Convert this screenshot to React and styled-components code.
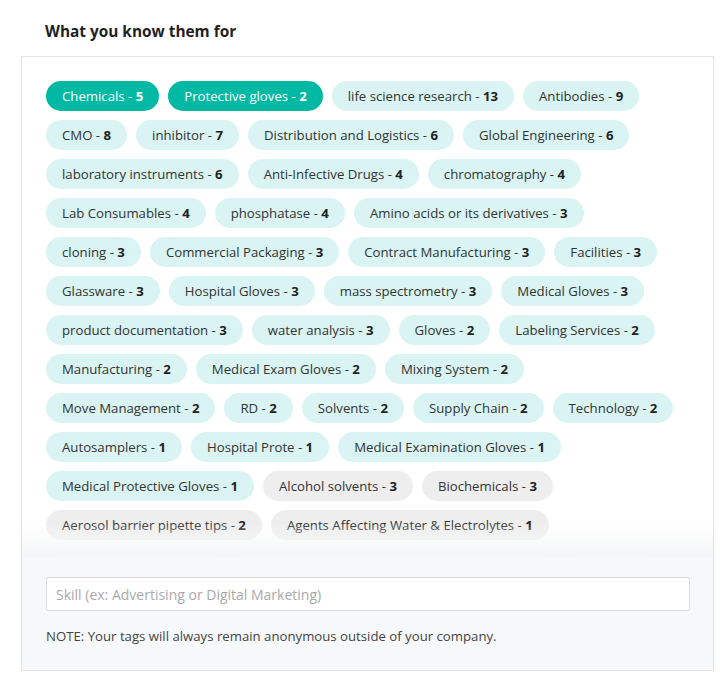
import React from 'react';
import styled, { createGlobalStyle } from 'styled-components';

const GlobalStyle = createGlobalStyle`
  body {
    margin: 0;
    background: #ffffff;
    font-family: "Open Sans", "Liberation Sans", sans-serif;
    color: #333333;
  }
`;

const Page = styled.div`
  width: 728px;
  padding: 21px 14px 12px 21px;
  box-sizing: border-box;
`;

const Heading = styled.h3`
  margin: 0 0 13px 24px;
  font-size: 15.4px;
  line-height: 22px;
  font-weight: 700;
  color: #1f1f1f;
`;

const Panel = styled.div`
  border: 1px solid #e3e3e3;
  display: flex;
  flex-direction: column;
`;

const TagArea = styled.div`
  position: relative;
  height: 500px;
  overflow: hidden;
  background: #ffffff;
`;

const TagList = styled.div`
  display: flex;
  flex-wrap: wrap;
  padding: 24px 24px 15px;
`;

const Fade = styled.div`
  position: absolute;
  left: 0;
  right: 0;
  bottom: 0;
  height: 34px;
  background: linear-gradient(to bottom, rgba(255, 255, 255, 0) 0%, rgba(246, 247, 248, 0.85) 75%, #f4f5f6 100%);
  pointer-events: none;
`;

const tones = {
  active: { bg: '#00b9a5', color: '#ffffff', count: '#ffffff' },
  known: { bg: '#d9f4f2', color: '#333333', count: '#222222' },
  other: { bg: '#eeeeee', color: '#333333', count: '#222222' },
};

const Tag = styled.span`
  display: inline-flex;
  align-items: center;
  height: 30px;
  margin: 0 9px 9px 0;
  padding: 0 16px;
  border-radius: 15px;
  font-size: 13.2px;
  white-space: pre;
  background: ${({ $tone }) => tones[$tone].bg};
  color: ${({ $tone }) => tones[$tone].color};

  b {
    font-weight: 700;
    color: ${({ $tone }) => tones[$tone].count};
  }
`;

const Footer = styled.div`
  background: #f7f8fa;
  padding: 20px 24px 25px;
  display: flex;
  flex-direction: column;
  gap: 16px;
`;

const Input = styled.input`
  height: 34px;
  box-sizing: border-box;
  width: 644px;
  border: 1px solid #dcdcdc;
  border-radius: 2px;
  background: #ffffff;
  padding: 0 9px;
  font-family: inherit;
  font-size: 14px;
  color: #333;
  outline: none;

  &::placeholder {
    color: #a9a9a9;
  }
`;

const Note = styled.p`
  margin: 0;
  font-size: 13.2px;
  line-height: 18px;
  color: #444444;
`;

const tags = [
  ['Chemicals', 5, 'active'],
  ['Protective gloves', 2, 'active'],
  ['life science research', 13, 'known'],
  ['Antibodies', 9, 'known'],
  ['CMO', 8, 'known'],
  ['inhibitor', 7, 'known'],
  ['Distribution and Logistics', 6, 'known'],
  ['Global Engineering', 6, 'known'],
  ['laboratory instruments', 6, 'known'],
  ['Anti-Infective Drugs', 4, 'known'],
  ['chromatography', 4, 'known'],
  ['Lab Consumables', 4, 'known'],
  ['phosphatase', 4, 'known'],
  ['Amino acids or its derivatives', 3, 'known'],
  ['cloning', 3, 'known'],
  ['Commercial Packaging', 3, 'known'],
  ['Contract Manufacturing', 3, 'known'],
  ['Facilities', 3, 'known'],
  ['Glassware', 3, 'known'],
  ['Hospital Gloves', 3, 'known'],
  ['mass spectrometry', 3, 'known'],
  ['Medical Gloves', 3, 'known'],
  ['product documentation', 3, 'known'],
  ['water analysis', 3, 'known'],
  ['Gloves', 2, 'known'],
  ['Labeling Services', 2, 'known'],
  ['Manufacturing', 2, 'known'],
  ['Medical Exam Gloves', 2, 'known'],
  ['Mixing System', 2, 'known'],
  ['Move Management', 2, 'known'],
  ['RD', 2, 'known'],
  ['Solvents', 2, 'known'],
  ['Supply Chain', 2, 'known'],
  ['Technology', 2, 'known'],
  ['Autosamplers', 1, 'known'],
  ['Hospital Prote', 1, 'known'],
  ['Medical Examination Gloves', 1, 'known'],
  ['Medical Protective Gloves', 1, 'known'],
  ['Alcohol solvents', 3, 'other'],
  ['Biochemicals', 3, 'other'],
  ['Aerosol barrier pipette tips', 2, 'other'],
  ['Agents Affecting Water & Electrolytes', 1, 'other'],
  ['Antibody Production', 2, 'other'],
  ['Antineoplastic Agents & Immunomodulators', 1, 'other'],
  ['Buffers', 1, 'other'],
];

const App = () => (
  <Page>
    <GlobalStyle />
    <Heading>What you know them for</Heading>
    <Panel>
      <TagArea>
        <TagList>
          {tags.map(([name, count, tone]) => (
            <Tag key={name} $tone={tone}>
              {`${name} - `}<b>{count}</b>
            </Tag>
          ))}
        </TagList>
        <Fade />
      </TagArea>
      <Footer>
        <Input placeholder="Skill (ex: Advertising or Digital Marketing)" />
        <Note>NOTE: Your tags will always remain anonymous outside of your company.</Note>
      </Footer>
    </Panel>
  </Page>
);

export default App;
